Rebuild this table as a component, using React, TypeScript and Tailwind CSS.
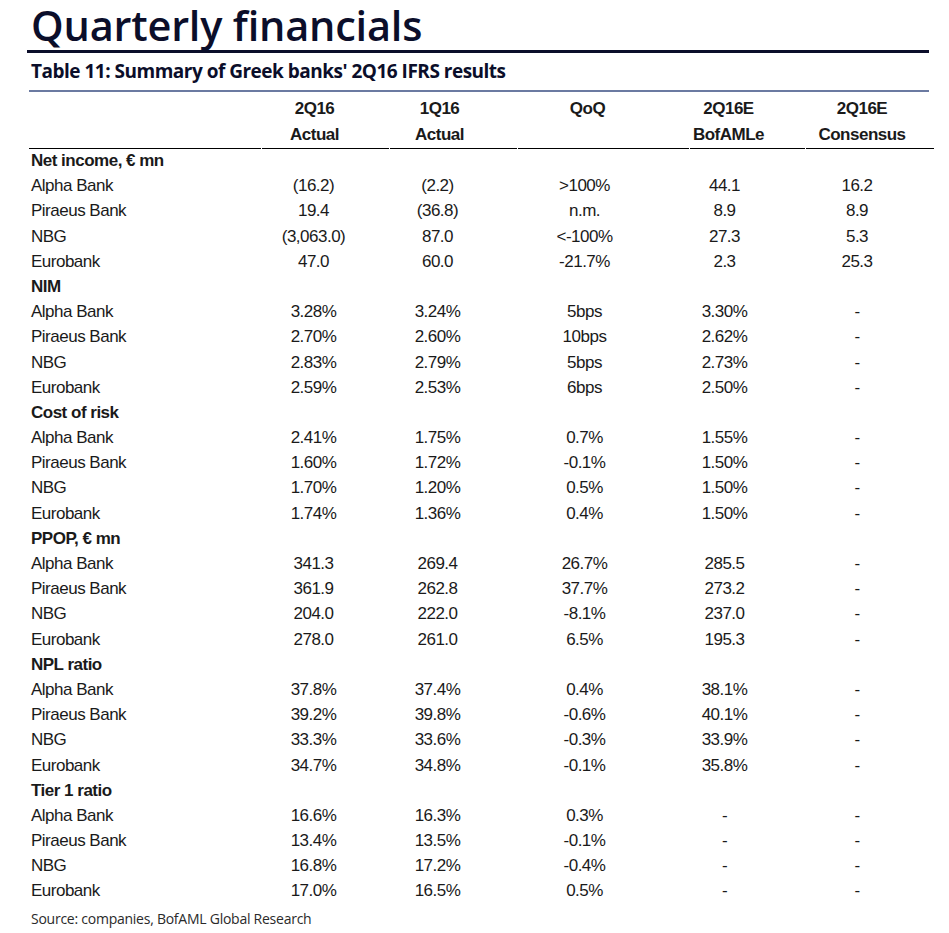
const sections: { title: string; rows: [string, string, string, string, string, string][] }[] = [
  {
    title: "Net income, € mn",
    rows: [
      ["Alpha Bank", "(16.2)", "(2.2)", ">100%", "44.1", "16.2"],
      ["Piraeus Bank", "19.4", "(36.8)", "n.m.", "8.9", "8.9"],
      ["NBG", "(3,063.0)", "87.0", "<-100%", "27.3", "5.3"],
      ["Eurobank", "47.0", "60.0", "-21.7%", "2.3", "25.3"],
    ],
  },
  {
    title: "NIM",
    rows: [
      ["Alpha Bank", "3.28%", "3.24%", "5bps", "3.30%", "-"],
      ["Piraeus Bank", "2.70%", "2.60%", "10bps", "2.62%", "-"],
      ["NBG", "2.83%", "2.79%", "5bps", "2.73%", "-"],
      ["Eurobank", "2.59%", "2.53%", "6bps", "2.50%", "-"],
    ],
  },
  {
    title: "Cost of risk",
    rows: [
      ["Alpha Bank", "2.41%", "1.75%", "0.7%", "1.55%", "-"],
      ["Piraeus Bank", "1.60%", "1.72%", "-0.1%", "1.50%", "-"],
      ["NBG", "1.70%", "1.20%", "0.5%", "1.50%", "-"],
      ["Eurobank", "1.74%", "1.36%", "0.4%", "1.50%", "-"],
    ],
  },
  {
    title: "PPOP, € mn",
    rows: [
      ["Alpha Bank", "341.3", "269.4", "26.7%", "285.5", "-"],
      ["Piraeus Bank", "361.9", "262.8", "37.7%", "273.2", "-"],
      ["NBG", "204.0", "222.0", "-8.1%", "237.0", "-"],
      ["Eurobank", "278.0", "261.0", "6.5%", "195.3", "-"],
    ],
  },
  {
    title: "NPL ratio",
    rows: [
      ["Alpha Bank", "37.8%", "37.4%", "0.4%", "38.1%", "-"],
      ["Piraeus Bank", "39.2%", "39.8%", "-0.6%", "40.1%", "-"],
      ["NBG", "33.3%", "33.6%", "-0.3%", "33.9%", "-"],
      ["Eurobank", "34.7%", "34.8%", "-0.1%", "35.8%", "-"],
    ],
  },
  {
    title: "Tier 1 ratio",
    rows: [
      ["Alpha Bank", "16.6%", "16.3%", "0.3%", "-", "-"],
      ["Piraeus Bank", "13.4%", "13.5%", "-0.1%", "-", "-"],
      ["NBG", "16.8%", "17.2%", "-0.4%", "-", "-"],
      ["Eurobank", "17.0%", "16.5%", "0.5%", "-", "-"],
    ],
  },
];

// per-column right padding so the figures sit where the report puts them
const pads = ["pr-[22px]", "pr-[28px]", "pr-[32px]", "pr-[38px]", "pr-[16px]"];

const grid = "grid grid-cols-[232px_127px_127px_171px_115px_128px]";

export default function App() {
  return (
    <div className="w-[949px] min-h-[933px] bg-white pl-[27px] pr-[20px]">
      <h1
        className="h-[50px] pl-[4px] text-[41.5px] leading-[50px] font-semibold text-[#0b0e2a] tracking-[-0.2px] whitespace-nowrap"
        style={{ fontFamily: '"Open Sans", sans-serif' }}
      >
        Quarterly financials
      </h1>
      <div className="h-[3px] bg-[#0b0e2a]" />
      <h2
        className="h-[37px] pl-[4px] pt-[6px] text-[19px] leading-[25px] font-bold text-[#0b0e2a] tracking-[-0.5px] whitespace-nowrap"
        style={{ fontFamily: '"Open Sans", sans-serif' }}
      >
        Table 11: Summary of Greek banks' 2Q16 IFRS results
      </h2>
      <div className="ml-[2px] h-[2px] bg-[#6b7aa1]" />

      <div
        className="ml-[2px] text-[17px] text-[#1a1a1a] tracking-[-0.5px]"
        style={{ fontFamily: '"Liberation Sans", Arial, sans-serif' }}
      >
        {/* header */}
        <div className={`${grid} gap-x-px h-[54px] font-bold`}>
          <div className="border-b border-black" />
          {[
            ["2Q16", "Actual"],
            ["1Q16", "Actual"],
            ["QoQ", ""],
            ["2Q16E", "BofAMLe"],
            ["2Q16E", "Consensus"],
          ].map(([a, b], i) => (
            <div
              key={i}
              className={`border-b border-black text-center flex flex-col pt-[4px] leading-[26px] ${pads[i]}`}
            >
              <span>{a}</span>
              <span>{b}</span>
            </div>
          ))}
        </div>

        {/* body */}
        <div className="pt-[2px]">
          {sections.map((s) => (
            <div key={s.title}>
              <div className="h-[25.2px] leading-[25.2px] pl-[2px] font-bold">{s.title}</div>
              {s.rows.map((r) => (
                <div key={r[0]} className={`${grid} h-[25.2px] leading-[25.2px]`}>
                  <div className="pl-[2px]">{r[0]}</div>
                  {r.slice(1).map((v, i) => (
                    <div key={i} className={`text-center ${pads[i]}`}>
                      {v}
                    </div>
                  ))}
                </div>
              ))}
            </div>
          ))}
        </div>
      </div>

      <p
        className="mt-[4px] pl-[4px] text-[14px] leading-[22px] text-[#2a2a2a] tracking-[-0.25px]"
        style={{ fontFamily: '"Open Sans", sans-serif' }}
      >
        Source: companies, BofAML Global Research
      </p>
    </div>
  );
}
